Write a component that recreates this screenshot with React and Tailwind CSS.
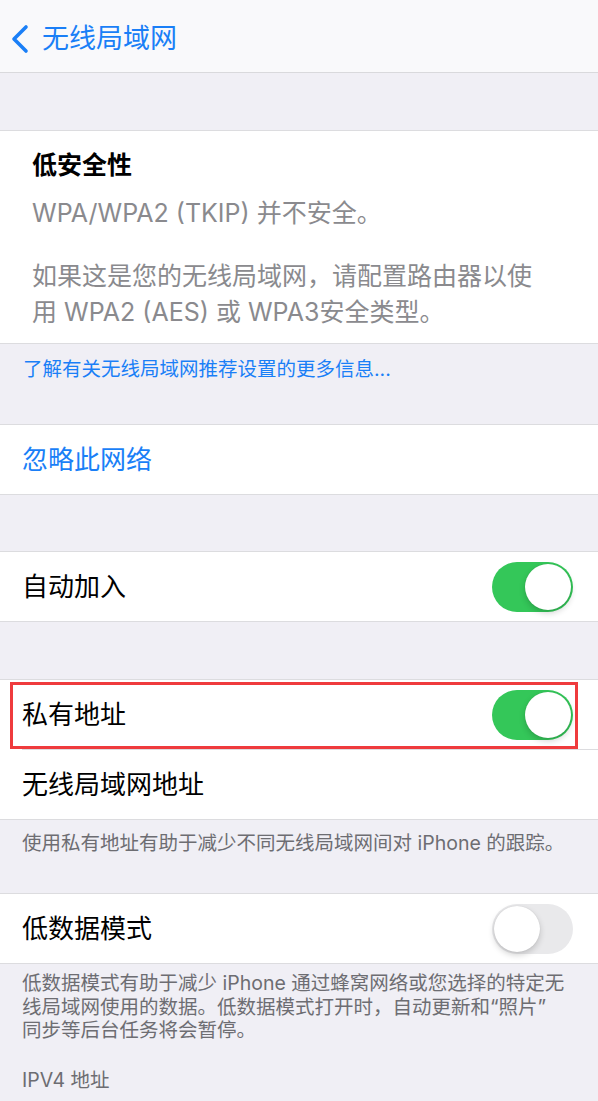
import React from "react";

function Toggle({ on }) {
  return (
    <div
      className={
        "relative w-[81px] h-[50px] rounded-full shrink-0 " +
        (on ? "bg-[#34c759]" : "bg-[#e9e9eb]")
      }
    >
      <div
        className={
          "absolute top-[2px] w-[46px] h-[46px] rounded-full bg-white shadow-[0_3px_6px_rgba(0,0,0,0.18),0_0_1px_rgba(0,0,0,0.15)] " +
          (on ? "right-[2px]" : "left-[2px]")
        }
      />
    </div>
  );
}

function Row({ children, right, blue }) {
  return (
    <div className="h-[69px] flex items-center justify-between pl-[22px] pr-[25px]">
      <span className={"text-[26px] leading-[36px] " + (blue ? "text-[#1a7ff7]" : "text-black")}>
        {children}
      </span>
      {right}
    </div>
  );
}

export default function App() {
  return (
    <div className="w-[598px] h-[1101px] overflow-hidden bg-[#f0eff5] font-['Inter','Noto_Sans_CJK_SC',sans-serif]">
      {/* navigation bar */}
      <div className="h-[73px] bg-[#f9f9fb] border-b border-[#d9d9dc] flex items-center pl-[10px] pt-[5px]">
        <svg width="20" height="30" viewBox="0 0 20 30">
          <path d="M16 3 L4 15 L16 27" fill="none" stroke="#1a7ff7" strokeWidth="3.6" strokeLinecap="round" strokeLinejoin="round" />
        </svg>
        <span className="ml-[12px] text-[27px] leading-[36px] text-[#1a7ff7]">无线局域网</span>
      </div>

      <div className="h-[57px]" />

      {/* security warning */}
      <div className="bg-white border-y border-[#dcdcdf] pl-[32px] pr-[20px] pt-[16px] pb-[13px]">
        <div className="text-[25px] leading-[36px] font-semibold text-black">低安全性</div>
        <div className="mt-[12px] text-[25px] leading-[36px] text-[#8a8a8e]">WPA/WPA2 (TKIP) 并不安全。</div>
        <div className="mt-[27px] text-[25px] leading-[36px] text-[#8a8a8e]">
          如果这是您的无线局域网，请配置路由器以使
          <br />
          用 WPA2 (AES) 或 WPA3安全类型。
        </div>
      </div>

      <div className="h-[80px] pl-[23px] pt-[12px]">
        <span className="text-[19.5px] leading-[26px] text-[#1a7ff7]">了解有关无线局域网推荐设置的更多信息...</span>
      </div>

      <div className="bg-white border-y border-[#dcdcdf]">
        <Row blue>忽略此网络</Row>
      </div>

      <div className="h-[56px]" />

      <div className="bg-white border-y border-[#dcdcdf]">
        <Row right={<Toggle on />}>自动加入</Row>
      </div>

      <div className="h-[57px]" />

      <div className="relative bg-white border-y border-[#dcdcdf]">
        <Row right={<Toggle on />}>私有地址</Row>
        <div className="ml-[22px] h-px bg-[#dcdcdf]" />
        <Row>无线局域网地址</Row>
        <div className="absolute left-[10px] top-[2px] w-[568px] h-[67px] border-[3px] border-[#ef3b3d]" />
      </div>

      <div className="h-[73px] pl-[22px] pt-[10px]">
        <span className="text-[19.5px] leading-[26px] text-[#6d6d72]">
          使用私有地址有助于减少不同无线局域网间对 iPhone 的跟踪。
        </span>
      </div>

      <div className="bg-white border-y border-[#dcdcdf]">
        <Row right={<Toggle />}>低数据模式</Row>
      </div>

      <div className="pl-[22px] pr-[24px] pt-[8px]">
        <p className="text-[19.5px] leading-[23.5px] text-[#6d6d72]">
          低数据模式有助于减少 iPhone 通过蜂窝网络或您选择的特定无
          <br />
          线局域网使用的数据。低数据模式打开时，自动更新和“照片”
          <br />
          同步等后台任务将会暂停。
        </p>
        <div className="mt-[24px] text-[19.5px] leading-[26px] text-[#6d6d72]">IPV4 地址</div>
      </div>
      <div className="mt-[9px] border-t border-[#dcdcdf]" />
    </div>
  );
}
